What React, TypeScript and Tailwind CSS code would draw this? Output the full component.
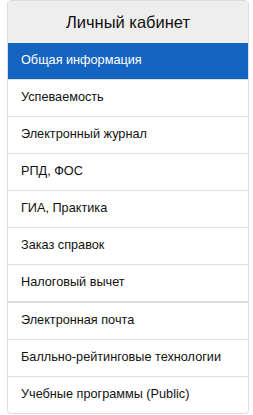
const GROUP_ONE = [
  "Общая информация",
  "Успеваемость",
  "Электронный журнал",
  "РПД, ФОС",
  "ГИА, Практика",
  "Заказ справок",
  "Налоговый вычет",
];

const GROUP_TWO = [
  "Электронная почта",
  "Балльно-рейтинговые технологии",
  "Учебные программы (Public)",
];

export default function App() {
  const active = "Общая информация";

  return (
    <div className="pl-[7px] pr-[4px] font-['Liberation_Sans',Arial,sans-serif]">
      <div className="w-[242px] border border-[#ddd] rounded-[4px] overflow-hidden bg-white">
        <div className="h-[42px] bg-[#eeeeee] flex items-center justify-center text-[16.5px] text-[#111]">
          Личный кабинет
        </div>
        <ul>
          {GROUP_ONE.map((item, i) => (
            <li
              key={item}
              className={`flex items-center pl-[13px] text-[12.7px] ${
                i > 0 ? "border-t border-[#ddd]" : ""
              } ${item === active ? "bg-[#1565c0] text-white h-[36px]" : "text-[#111] h-[37px]"}`}
            >
              {item}
            </li>
          ))}
        </ul>
        <ul className="border-t border-[#ddd]">
          {GROUP_TWO.map((item) => (
            <li
              key={item}
              className="h-[37px] flex items-center pl-[13px] text-[12.7px] text-[#111] border-t border-[#ddd]"
            >
              {item}
            </li>
          ))}
        </ul>
      </div>
    </div>
  );
}
